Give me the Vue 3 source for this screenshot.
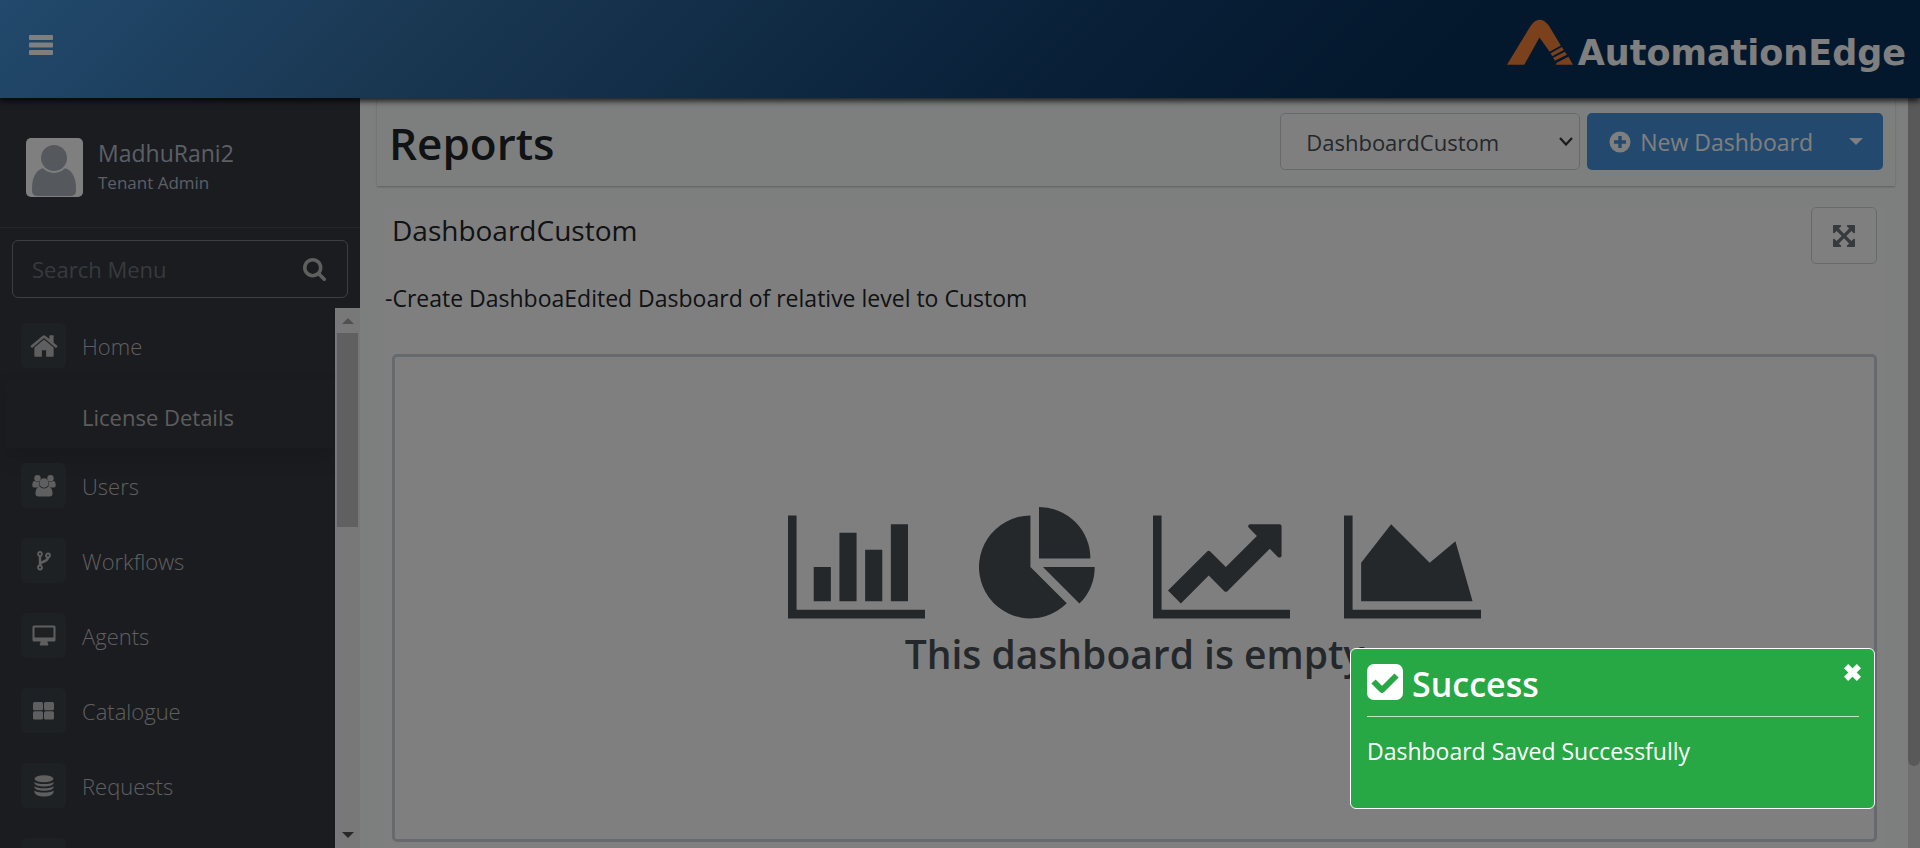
<script setup>
import { ref } from 'vue'

const search = ref('')
const dashboard = ref('DashboardCustom')

const menu = [
  { label: 'Home', icon: 'home' },
  { label: 'License Details', sub: true },
  { label: 'Users', icon: 'users' },
  { label: 'Workflows', icon: 'fork' },
  { label: 'Agents', icon: 'desktop' },
  { label: 'Catalogue', icon: 'grid' },
  { label: 'Requests', icon: 'database' },
  { label: '', icon: 'blank' },
]

const charts = [
  {
    name: 'bar',
    box: '0 0 2048 1792',
    path: 'M640 896v512H384V896zM1024 384v1024H768V384zM2048 1536v128H0V128h128v1408zM1408 640v768h-256V640zM1792 256v1152h-256V256z',
  },
  {
    name: 'pie',
    box: '0 0 1792 1792',
    path: 'M768 896l543 543A768 768 0 1 1 768 128zM955 896h773a768 768 0 0 1-228 546zM1664 768H896V0a768 768 0 0 1 768 768z',
  },
  {
    name: 'line',
    box: '0 0 2048 1792',
    path: 'M2048 1536v128h-2048v-1536h128v1408h1920zm-128-1248v435q0 21-19.500 29.500t-35.500-7.500l-121-121-633 633q-10 10-23 10t-23-10l-233-233-416 416-192-192 585-585q10-10 23-10t23 10l233 233 464-464-121-121q-16-16-7.500-35.500t29.500-19.500h435q14 0 23 9t9 23z',
  },
  {
    name: 'area',
    box: '0 0 2048 1792',
    path: 'M2048 1536v128h-2048v-1536h128v1408h1920zm-384-1024l256 896h-1664v-576l448-576 576 576z',
  },
]
</script>

<template>
  <div class="app">
    <header class="topbar">
      <button class="menu-toggle" type="button" aria-label="Toggle menu">
        <svg viewBox="0 0 24 20" width="24" height="20">
          <rect width="24" height="5" rx="1" />
          <rect y="7.500" width="24" height="5" rx="1" />
          <rect y="15" width="24" height="5" rx="1" />
        </svg>
      </button>
      <a class="brand" href="#">
        <svg viewBox="0 0 65 46" width="66" height="47">
          <path d="M0 45L23 7Q27 .5 32 .5T41 6L53 26 42 32 32 18 17 45z" />
          <path d="M43 33.500L54 27.500 56 30.500 44.500 36.500zM45.500 38L57 32 59 35 47 41zM49 43L60.500 37 65 45H48z" />
        </svg>
        <span>AutomationEdge</span>
      </a>
    </header>

    <div class="body">
      <aside class="sidebar">
        <div class="profile">
          <svg class="avatar" viewBox="0 0 57 59" width="57" height="59">
            <rect width="57" height="59" rx="5" fill="#fff" />
            <path d="M18 30h20c8 1 12 10 12 20v3q0 5-6 5H12q-6 0-6-5v-3c0-10 4-19 12-20z" fill="#abb3ba" />
            <circle cx="28" cy="20" r="15" fill="#fff" />
            <circle cx="28" cy="20" r="13" fill="#abb3ba" />
          </svg>
          <div class="who">
            <span class="name">MadhuRani2</span>
            <span class="role">Tenant Admin</span>
          </div>
        </div>
        <div class="search">
          <input v-model="search" type="text" placeholder="Search Menu" aria-label="Search Menu" />
          <button type="button" aria-label="Search">
            <svg viewBox="0 128 1664 1664" width="23" height="23">
              <path d="M1152 832q0-185-131.500-316.500t-316.500-131.500-316.500 131.500-131.500 316.500 131.500 316.500 316.500 131.500 316.500-131.500 131.500-316.500zm512 832q0 52-38 90t-90 38q-54 0-90-38l-343-342q-179 124-399 124-143 0-273.500-55.500t-225-150-150-225-55.500-273.500 55.500-273.500 150-225 225-150 273.500-55.500 273.500 55.500 225 150 150 225 55.500 273.500q0 220-124 399l343 343q37 37 37 90z" />
            </svg>
          </button>
        </div>
        <div class="menu-area">
          <nav class="menu">
            <a v-for="(item, i) in menu" :key="i" href="#" class="item" :class="{ sub: item.sub }">
              <span v-if="!item.sub" class="tile">
                <svg v-if="item.icon === 'home'" viewBox="0 0 1664 1792" width="28" height="30">
                  <path d="M1408 992v480q0 26-19 45t-45 19h-384v-384h-256v384h-384q-26 0-45-19t-19-45v-480q0-1 .5-3t.5-3l575-474 575 474q1 2 1 6zm223-69l-62 74q-8 9-21 11h-3q-13 0-21-7l-692-577-692 577q-12 8-24 7-13-2-21-11l-62-74q-8-10-7-23.500t11-21.500l719-599q32-26 76-26t76 26l244 204v-195q0-14 9-23t23-9h192q14 0 23 9t9 23v408l219 182q10 8 11 21.500t-7 23.500z" />
                </svg>
                <svg v-else-if="item.icon === 'users'" viewBox="0 0 24 22" width="24" height="22">
                  <circle cx="5.500" cy="3.200" r="3.200" />
                  <circle cx="18.500" cy="3.200" r="3.200" />
                  <path d="M2.500 6Q5 7.500 7 6.200 6.200 9.500 8 11.500 6 11.500 5 12.500H2Q.3 12.500.3 10.500 .3 6 2.500 6zM21.500 6Q19 7.500 17 6.200 17.800 9.500 16 11.500 18 11.500 19 12.500h3q1.700 0 1.700-2Q23.700 6 21.500 6z" />
                  <circle cx="12" cy="8" r="4.700" />
                  <path d="M7.500 11.500Q12 15.500 16.500 11.500q4 1 4 7 0 3-3 3h-11q-3 0-3-3 0-6 4-7z" />
                </svg>
                <svg v-else-if="item.icon === 'fork'" class="line" viewBox="0 0 14 20" width="14" height="20">
                  <circle cx="3" cy="3" r="2" />
                  <circle cx="11" cy="4.500" r="2" />
                  <circle cx="3" cy="16.500" r="2" />
                  <path d="M3 5v9.500M11 6.500c0 5-8 3-8 7.500" stroke-width="2.400" />
                </svg>
                <svg v-else-if="item.icon === 'desktop'" viewBox="0 0 24 21" width="24" height="21">
                  <path fill-rule="evenodd" d="M2 .5h20q1.500 0 1.500 1.500v13q0 1.500-1.500 1.500h-6.500q0 1.500.8 2.500.3 1-.8 1.500h-7Q7.400 20 7.700 19q.8-1 .8-2.500H2Q.5 16.500.5 15V2Q.5.5 2 .5zM2.500 2.500v10h19v-10z" />
                </svg>
                <svg v-else-if="item.icon === 'grid'" viewBox="0 0 21 18" width="21" height="18">
                  <rect width="10" height="8.300" rx="1.500" />
                  <rect x="11" width="10" height="8.300" rx="1.500" />
                  <rect y="9.300" width="10" height="8.300" rx="1.500" />
                  <rect x="11" y="9.300" width="10" height="8.300" rx="1.500" />
                </svg>
                <svg v-else-if="item.icon === 'database'" viewBox="0 0 20 22" width="20" height="22">
                  <ellipse cx="10" cy="3.800" rx="9.500" ry="3.500" />
                  <path d="M.5 7Q3 9 10 9t9.500-2v1.500Q18 11.500 10 11.500T.5 8.500zM.5 11.200q2.500 2 9.500 2t9.500-2v1.500Q18 15.700 10 15.700T.5 12.700zM.5 15.400q2.500 2 9.500 2t9.500-2v2.100Q18 21.500 10 21.500T.5 17.500z" />
                </svg>
              </span>
              <span class="label">{{ item.label }}</span>
            </a>
          </nav>
          <div class="scroll" aria-hidden="true">
            <svg viewBox="0 0 12 6" width="12" height="6" class="up"><path d="M0 6L6 0l6 6z" /></svg>
            <div class="thumb"></div>
            <svg viewBox="0 0 12 6" width="12" height="6"><path d="M0 0h12L6 6z" /></svg>
          </div>
        </div>
      </aside>

      <main class="content">
        <section class="toolbar">
          <h1>Reports</h1>
          <div class="picker">
            <select v-model="dashboard" aria-label="Dashboard">
              <option>DashboardCustom</option>
            </select>
            <svg viewBox="0 0 14 9" width="14" height="9"><path d="M1 1l6 6.500L13 1" /></svg>
          </div>
          <div class="split">
            <button type="button" class="new">
              <svg viewBox="0 0 22 22" width="22" height="22">
                <path fill-rule="evenodd" d="M11 .5a10.500 10.500 0 1 1 0 21 10.500 10.500 0 0 1 0-21zM9.300 5v4.300H5v3.400h4.300V17h3.400v-4.300H17V9.300h-4.300V5z" />
              </svg>
              New Dashboard
            </button>
            <button type="button" class="more" aria-label="More options">
              <svg viewBox="0 0 14 7" width="14" height="7"><path d="M0 0h14L7 7z" /></svg>
            </button>
          </div>
        </section>

        <section class="panel">
          <div class="panel-head">
            <h2>{{ dashboard }}</h2>
            <button type="button" class="expand" aria-label="Full screen">
              <svg viewBox="128 128 1536 1536" width="22" height="22">
                <path d="M1411 541l-355 355 355 355 144-144q29-31 70-14 39 17 39 59v448q0 26-19 45t-45 19h-448q-42 0-59-40-17-39 14-69l144-144-355-355-355 355 144 144q31 30 14 69-17 40-59 40h-448q-26 0-45-19t-19-45v-448q0-42 40-59 39-17 69 14l144 144 355-355-355-355-144 144q-19 19-45 19-12 0-24-5-40-17-40-59v-448q0-26 19-45t45-19h448q42 0 59 40 17 39-14 69l-144 144 355 355 355-355-144-144q-31-30-14-69 17-40 59-40h448q26 0 45 19t19 45v448q0 42-39 59-13 5-25 5-26 0-45-19z" />
              </svg>
            </button>
          </div>
          <p class="desc">-Create DashboaEdited Dasboard of relative level to Custom</p>
          <div class="empty">
            <div class="charts">
              <svg v-for="c in charts" :key="c.name" :viewBox="c.box" height="120"><path :d="c.path" /></svg>
            </div>
            <h3>This dashboard is empty</h3>
          </div>
        </section>
      </main>
      <div class="page-scroll" aria-hidden="true"><div class="page-thumb"></div></div>
    </div>

    <div class="backdrop"></div>

    <div class="toast" role="alert">
      <button type="button" class="close" aria-label="Close">
        <svg viewBox="0 0 18 18" width="21" height="21"><path d="M3.500 3.500l11 11M14.500 3.500l-11 11" /></svg>
      </button>
      <div class="toast-title">
        <svg viewBox="0 0 36 36" width="36" height="36">
          <rect width="36" height="36" rx="7" fill="#fff" />
          <path d="M6.500 17.500L15 26 29.500 11.500" fill="none" stroke="#28a745" stroke-width="6" stroke-linejoin="round" />
        </svg>
        <strong>Success</strong>
      </div>
      <p>Dashboard Saved Successfully</p>
    </div>
  </div>
</template>

<style>
body {
  margin: 0;
  overflow: hidden;
}
</style>

<style scoped>
.app {
  display: flex;
  flex-direction: column;
  height: 100vh;
  overflow: hidden;
  font-family: "Open Sans", "Noto Sans", sans-serif;
  font-size: 22px;
  line-height: 32px;
  color: #212529;
  background: #f9fefc;
}

* {
  box-sizing: border-box;
}

button,
input,
select {
  margin: 0;
  padding: 0;
  border: 0;
  background: none;
  font: inherit;
  color: inherit;
}

a {
  color: inherit;
  text-decoration: none;
}

svg {
  display: block;
  flex: none;
}

.topbar {
  position: relative;
  z-index: 2;
  flex: none;
  display: flex;
  justify-content: space-between;
  height: 98px;
  padding: 19px 14px 0 29px;
  background: linear-gradient(135deg, #4494d8 0%, #3a7cba 14%, #3470a4 22%, #24598c 38%, #123f70 56%, #063058 75%, #063058 100%);
  box-shadow: 0 3px 6px rgba(0, 0, 0, 0.8);
}

.menu-toggle {
  align-self: flex-start;
  padding: 16px 0;
  fill: #fff;
}

.brand {
  display: flex;
  align-items: flex-start;
  gap: 5px;
  height: 47px;
  color: #fff;
  fill: #f58238;
  font-family: "DejaVu Sans", sans-serif;
  font-size: 35px;
  font-weight: 700;
  line-height: 68px;
}

.body {
  flex: 1;
  min-height: 0;
  display: flex;
}

.sidebar {
  flex: none;
  display: flex;
  flex-direction: column;
  width: 360px;
  background: #36383f;
}

.profile {
  display: flex;
  gap: 15px;
  height: 130px;
  padding: 40px 26px 0;
  border-bottom: 1px solid #484b52;
}

.who {
  display: flex;
  flex-direction: column;
  color: #b8bfce;
}

.name {
  font-size: 23px;
  line-height: 30px;
}

.role {
  font-size: 17px;
  line-height: 30px;
}

.search {
  display: flex;
  align-items: center;
  margin: 12px 12px 10px;
  height: 58px;
  padding: 0 21px 0 19px;
  border: 1px solid #7a7d82;
  border-radius: 6px;
}

.search input {
  flex: 1;
  min-width: 0;
  outline: 0;
  color: #b8bfce;
}

.search input::placeholder {
  color: #6c757d;
  opacity: 1;
}

.search svg {
  fill: #bebebe;
}

.menu-area {
  flex: 1;
  min-height: 0;
  display: flex;
}

.menu {
  flex: 1;
  overflow: hidden;
}

.item {
  display: flex;
  align-items: center;
  gap: 16px;
  height: 75px;
  padding: 0 21px;
  font-weight: 300;
  color: #bebebe;
}

.item.sub {
  height: 69px;
  margin: -4px 0 0 6px;
  padding: 6px 0 0 76px;
  font-weight: 400;
  color: #b8b8b8;
  box-shadow: 0 10px 20px rgba(0, 0, 0, 0.12);
}

.tile {
  flex: none;
  display: flex;
  align-items: center;
  justify-content: center;
  width: 45px;
  height: 45px;
  border-radius: 6px;
  background: #3b4249;
  fill: #bebebe;
}

.line {
  fill: none;
  stroke: #bebebe;
  stroke-width: 1.800;
}

.scroll {
  flex: none;
  display: flex;
  flex-direction: column;
  align-items: center;
  width: 25px;
  padding: 10px 2px;
  background: #f1f1f1;
  fill: #505050;
}

.scroll .up {
  fill: #a3a3a3;
}

.thumb {
  width: 21px;
  height: 194px;
  margin: 9px 0 auto;
  background: #c1c1c1;
}

.content {
  flex: 1;
  min-width: 0;
  padding: 0 13px 0 17px;
}

.toolbar {
  display: flex;
  height: 88px;
  padding: 15px 12px 0 12px;
  box-shadow: 0 1px 2px rgba(0, 0, 0, 0.25);
}

h1 {
  flex: 1;
  margin: 0;
  font-size: 44px;
  font-weight: 600;
  line-height: 60px;
}

.picker {
  display: grid;
  align-items: center;
  width: 300px;
  height: 57px;
  margin-right: 7px;
}

.picker select,
.picker svg {
  grid-area: 1 / 1;
}

.picker select {
  appearance: none;
  width: 100%;
  height: 57px;
  padding: 0 25px;
  border: 1px solid #ced4da;
  border-radius: 5px;
  background: #fff;
  color: #495057;
}

.picker svg {
  justify-self: end;
  margin-right: 7px;
  fill: none;
  stroke: #333;
  stroke-width: 2.200;
  pointer-events: none;
}

.split {
  display: flex;
  height: 57px;
  border-radius: 5px;
  background: #4693dc;
  color: #fff;
  fill: #fff;
}

.new {
  display: flex;
  align-items: center;
  gap: 9px;
  padding-left: 22px;
  font-size: 23px;
}

.more {
  width: 70px;
  padding-left: 36px;
}

.panel {
  margin: 21px 11px 0 7px;
  padding: 0 7px 6px 8px;
  background: #fff;
}

.panel-head {
  display: flex;
  justify-content: space-between;
  align-items: flex-start;
}

h2 {
  margin: 0;
  font-size: 28px;
  font-weight: 400;
  line-height: 46px;
}

.expand {
  display: flex;
  align-items: center;
  justify-content: center;
  width: 66px;
  height: 57px;
  border: 1px solid #ced4da;
  border-radius: 5px;
  fill: #6c757d;
}

.desc {
  margin: 18px -7px 40px;
  font-size: 23px;
}

.empty {
  display: flex;
  flex-direction: column;
  align-items: center;
  height: 488px;
  padding-top: 150px;
  border: 3px solid #ced4da;
  border-radius: 5px;
  color: #495057;
}

.charts {
  display: flex;
  gap: 54px;
  fill: #495057;
}

h3 {
  margin: 0;
  font-size: 39px;
  font-weight: 600;
  line-height: 54px;
}

.page-scroll {
  flex: none;
  width: 12px;
  background: #dedede;
}

.page-thumb {
  height: 668px;
  border-radius: 0 0 6px 6px;
  background: #b2b2b2;
}

.backdrop {
  position: fixed;
  inset: 0;
  z-index: 5;
  background: rgba(0, 0, 0, 0.5);
}

.toast {
  position: fixed;
  z-index: 6;
  right: 45px;
  bottom: 39px;
  width: 525px;
  min-height: 161px;
  padding: 11px 15px 11px 16px;
  border: 1px solid #fff;
  border-radius: 6px;
  background: #28a745;
  color: #fff;
}

.close {
  position: absolute;
  top: 13px;
  right: 11px;
  stroke: #fff;
  stroke-width: 5;
}

.toast-title {
  display: flex;
  align-items: flex-start;
  gap: 9px;
  height: 57px;
  padding-top: 4px;
  border-bottom: 1px solid rgba(255, 255, 255, 0.7);
  font-size: 34px;
}

.toast-title strong {
  font-weight: 600;
  line-height: 40px;
}

.toast p {
  margin: 18px 0 0;
  font-size: 23px;
}
</style>
